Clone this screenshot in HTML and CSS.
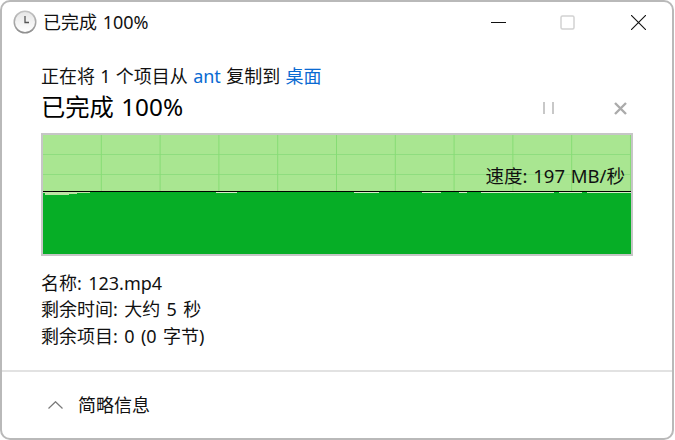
FILE: index.html
```html
<!DOCTYPE html>
<html>
<head>
<meta charset="UTF-8">
<title>已完成 100%</title>
<link rel="stylesheet" href="styles.css">
</head>
<body>
<div class="window">
	<div class="titlebar">
		<svg class="clock" width="24" height="24" viewBox="0 0 24 24">
			<defs>
				<linearGradient id="rim" x1="0" y1="0" x2="0" y2="1">
					<stop offset="0" stop-color="#c4c4c4"/>
					<stop offset="1" stop-color="#8d8d8d"/>
				</linearGradient>
				<linearGradient id="face" x1="0" y1="0" x2="0" y2="1">
					<stop offset="0" stop-color="#e6e6e6"/>
					<stop offset="1" stop-color="#ffffff"/>
				</linearGradient>
			</defs>
			<circle cx="12" cy="12" r="11.5" fill="url(#rim)"/>
			<circle cx="12" cy="12" r="10" fill="url(#face)"/>
			<path d="M12 6v6.5h4" fill="none" stroke="#555" stroke-width="1.3"/>
		</svg>
		<div class="wintitle">已完成 100%</div>
		<svg class="winbtn minbtn" width="15" height="15" viewBox="0 0 15 15">
			<path d="M0 7.5h15" stroke="#111" stroke-width="1"/>
		</svg>
		<svg class="winbtn maxbtn" width="15" height="15" viewBox="0 0 15 15">
			<rect x="1" y="1" width="13" height="13" rx="1.5" fill="none" stroke="#d2d2d2" stroke-width="1.5"/>
		</svg>
		<svg class="winbtn" width="15" height="15" viewBox="0 0 15 15">
			<path d="M0 0L15 15M15 0L0 15" stroke="#111" stroke-width="1.1"/>
		</svg>
	</div>

	<div class="content">
		<div class="copyline">正在将 1 个项目从 <span class="link">ant</span> 复制到 <span class="link">桌面</span></div>
		<div class="headrow">
			<div class="heading">已完成 100%</div>
			<svg class="pause" width="11" height="12" viewBox="0 0 11 12">
				<path d="M1 0v12M10 0v12" stroke="#c8c8c8" stroke-width="2"/>
			</svg>
			<svg class="cancel" width="13" height="13" viewBox="0 0 13 13">
				<path d="M1 1L12 12M12 1L1 12" stroke="#ababab" stroke-width="2.4"/>
			</svg>
		</div>

		<div class="graph">
			<svg class="slivers" width="588" height="62" viewBox="0 0 588 62">
				<rect x="0" y="0" width="588" height="62" fill="#06ae26"/>
				<g fill="#bfe3a5">
					<rect x="0" y="0" width="47" height="1"/>
					<rect x="2" y="0" width="24" height="3"/>
					<rect x="26" y="0" width="8" height="2"/>
				</g>
				<g fill="#d4ecc4">
					<rect x="173" y="0" width="21" height="1"/>
					<rect x="311" y="0" width="25" height="1"/>
					<rect x="379" y="0" width="19" height="1"/>
					<rect x="416" y="0" width="8" height="1"/>
					<rect x="438" y="0" width="73" height="1"/>
					<rect x="516" y="0" width="23" height="1"/>
					<rect x="544" y="0" width="44" height="1"/>
				</g>
			</svg>
			<div class="speed">速度: 197 MB/秒</div>
		</div>

		<div class="details">
			<div>名称: 123.mp4</div>
			<div>剩余时间: 大约 5 秒</div>
			<div>剩余项目: 0 (0 字节)</div>
		</div>
	</div>

	<div class="footer">
		<svg class="chevron" width="15" height="8" viewBox="0 0 15 8">
			<path d="M0.5 7.5L7.5 0.7L14.5 7.5" fill="none" stroke="#7a7a7a" stroke-width="1.2"/>
		</svg>
		<span class="less">简略信息</span>
	</div>
</div>
</body>
</html>
```

FILE: styles.css
```css
html, body{
	margin : 0;
	padding : 0;
	background-color : #ffffff;
}

body{
	font-family : "Noto Sans", "Noto Sans CJK SC", sans-serif;
	font-size : 18px;
	word-spacing : 1px;
	color : #111111;
}

.window{
	box-sizing : border-box;
	width : 674px;
	height : 440px;
	display : flex;
	flex-direction : column;
	background-color : #ffffff;
	border : 2px solid #b9b9b9;
	border-radius : 10px;
	overflow : hidden;
}

.titlebar{
	height : 40px;
	display : flex;
	align-items : center;
	padding-left : 11px;
	flex-shrink : 0;
}

.wintitle{
	margin-left : 6px;
	margin-bottom : 3px;
	flex : 1;
}

.winbtn{
	display : block;
	margin-right : 26px;
}

.minbtn{
	margin-right : 54px;
}

.maxbtn{
	margin-right : 56px;
}

.content{
	flex : 1;
	padding : 22px 0 0 39px;
}

.copyline{
	height : 24px;
	line-height : 24px;
	word-spacing : 0.6px;
}

.link{
	color : #0a6ad2;
}

.headrow{
	height : 34px;
	display : flex;
	align-items : center;
}

.heading{
	font-size : 24.3px;
	color : #000000;
	flex : 1;
}

.pause{
	display : block;
	margin-top : 6px;
	margin-right : 60px;
}

.cancel{
	display : block;
	margin-top : 6px;
	margin-right : 45px;
}

.graph{
	box-sizing : border-box;
	position : relative;
	width : 592px;
	height : 123px;
	margin-top : 11px;
	border : 2px solid #c6c6c6;
	background-color : #a9e691;
	background-image :
		linear-gradient(to right, transparent 57.8px, #86dc74 57.8px),
		linear-gradient(to bottom, transparent 19px, #8fdd7f 19px);
	background-size : 58.8px 100%, 100% 20px;
}

.slivers{
	display : block;
	position : absolute;
	left : 0;
	bottom : 0;
	border-top : 1px solid #000000;
}

.speed{
	position : absolute;
	right : 6px;
	top : 29px;
	line-height : 24px;
	font-size : 18.5px;
}

.details{
	margin-top : 14px;
	line-height : 26.4px;
	word-spacing : 1.7px;
}

.footer{
	height : 66px;
	display : flex;
	align-items : center;
	padding-left : 46px;
	border-top : 2px solid #e2e2e2;
	flex-shrink : 0;
}

.chevron{
	display : block;
	margin-right : 15px;
}

.less{
	margin-bottom : 2px;
}
```
